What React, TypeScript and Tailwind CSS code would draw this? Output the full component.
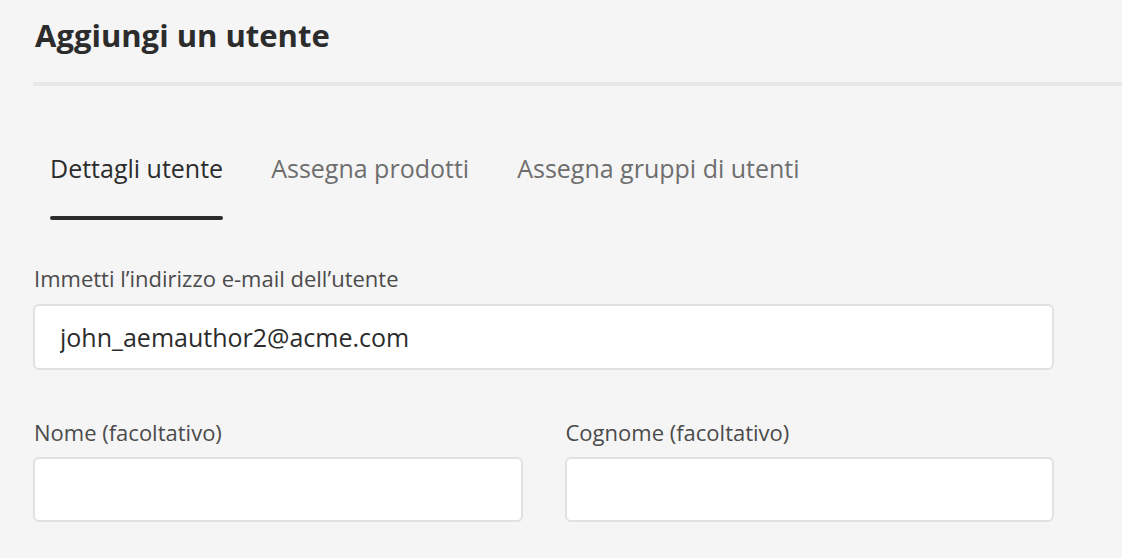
import { useState } from "react";

function App() {
  const tabs = ["Dettagli utente", "Assegna prodotti", "Assegna gruppi di utenti"];
  const [active, setActive] = useState(0);

  return (
    <div
      className="min-h-screen bg-[#f5f5f5] pl-[33px] overflow-hidden"
      style={{ fontFamily: '"Open Sans", "Noto Sans", sans-serif' }}
    >
      <h1 className="pt-[14px] pl-[2px] text-[31px] leading-[42px] font-bold text-[#2c2c2c]">
        Aggiungi un utente
      </h1>
      <div className="mt-[26px] h-[4px] bg-[#e8e8e8]" />

      <div className="mt-[64px] flex gap-[48px] pl-[17px]">
        {tabs.map((t, i) => (
          <button
            key={t}
            onClick={() => setActive(i)}
            className="flex flex-col items-stretch"
          >
            <span
              className={`text-[25px] leading-[36px] ${
                active === i ? "text-[#2c2c2c]" : "text-[#6e6e6e]"
              }`}
            >
              {t}
            </span>
            <span
              className={`mt-[30px] h-[4px] rounded-full ${
                active === i ? "bg-[#2c2c2c]" : "bg-transparent"
              }`}
            />
          </button>
        ))}
      </div>

      <div className="w-[1021px]">
        <label className="mt-[43px] block pl-[1px] text-[22px] leading-[30px] text-[#4b4b4b]">
          Immetti l’indirizzo e-mail dell’utente
        </label>
        <input
          readOnly
          defaultValue="john_aemauthor2@acme.com"
          className="mt-[11px] block h-[66px] w-full rounded-[6px] border-2 border-[#e1e1e1] bg-white px-[25px] text-[25px] text-[#2c2c2c] outline-none"
        />

        <div className="mt-[47px] grid grid-cols-2 gap-[42px]">
          <div>
            <label className="block pl-[1px] text-[22px] leading-[30px] text-[#4b4b4b]">
              Nome (facoltativo)
            </label>
            <input className="mt-[10px] block h-[65px] w-full rounded-[6px] border-2 border-[#e1e1e1] bg-white px-[25px] text-[25px] outline-none" />
          </div>
          <div>
            <label className="block pl-[1px] text-[22px] leading-[30px] text-[#4b4b4b]">
              Cognome (facoltativo)
            </label>
            <input className="mt-[10px] block h-[65px] w-full rounded-[6px] border-2 border-[#e1e1e1] bg-white px-[25px] text-[25px] outline-none" />
          </div>
        </div>
      </div>
    </div>
  );
}

export default App;
